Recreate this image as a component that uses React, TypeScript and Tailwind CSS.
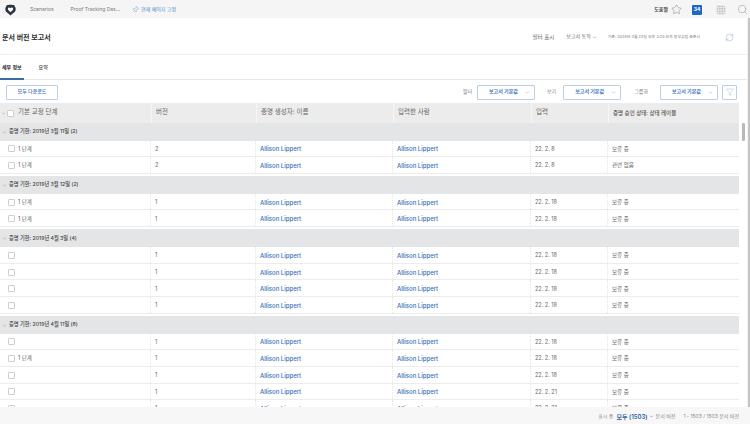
import React from "react";
import { Star, Search, Grid3x3, RefreshCw, Funnel, Pin, ChevronDown } from "lucide-react";

const font = "font-['Inter','Noto_Sans_CJK_KR',sans-serif]";
const cols = "grid grid-cols-[151px_105px_137px_138px_77px_131px]";

type Row = { step?: string; v: string; date: string; status?: string };
const HOLD = "보류 중";
const groups: { title: string; rows: Row[] }[] = [
  { title: "증명 기한: 2019년 3월 11일 (2)", rows: [
    { step: "1 단계", v: "2", date: "22. 2. 8" },
    { step: "1 단계", v: "2", date: "22. 2. 8", status: "관련 없음" },
  ]},
  { title: "증명 기한: 2019년 3월 12일 (2)", rows: [
    { step: "1 단계", v: "1", date: "22. 2. 18" },
    { step: "1 단계", v: "1", date: "22. 2. 18" },
  ]},
  { title: "증명 기한: 2019년 4월 3일 (4)", rows: [
    { v: "1", date: "22. 2. 18" },
    { v: "1", date: "22. 2. 18" },
    { v: "1", date: "22. 2. 18" },
    { v: "1", date: "22. 2. 18" },
  ]},
  { title: "증명 기한: 2019년 4월 11일 (8)", rows: [
    { v: "1", date: "22. 2. 18" },
    { step: "1 단계", v: "1", date: "22. 2. 18" },
    { v: "1", date: "22. 2. 18" },
    { v: "1", date: "22. 2. 21" },
    { v: "1", date: "22. 2. 21" },
    { v: "1", date: "22. 2. 21" },
  ]},
];

function Select() {
  return (
    <div className="flex h-[15px] w-[58px] items-center justify-between rounded-[1px] border border-[#b9cfe8] bg-white pl-[11px] pr-[4px] text-[5px] font-semibold text-[#3f78ba]">
      <span>보고서 기본값</span>
      <ChevronDown size={5} className="text-[#8a9099]" />
    </div>
  );
}

function Check({ white }: { white?: boolean }) {
  return <span className={`block h-[7px] w-[7px] shrink-0 rounded-[1px] border border-[#cfcfcf] ${white ? "bg-white" : ""}`} />;
}

function DataRow({ r }: { r: Row }) {
  const cell = "flex items-center border-r border-dotted border-[#e6e6e6] h-full pt-[1px]";
  return (
    <div className={`${cols} h-[16.65px] border-b border-[#ececec] bg-white text-[5.5px] text-[#666]`}>
      <div className={`${cell} gap-[3px] pl-[8px]`}><Check /><span>{r.step}</span></div>
      <div className={`${cell} pl-[4px]`}>{r.v}</div>
      <div className={`${cell} pl-[4px] text-[6px] font-medium text-[#3570b8]`}>Allison Lippert</div>
      <div className={`${cell} pl-[4px] text-[6px] font-medium text-[#3570b8]`}>Allison Lippert</div>
      <div className={`${cell} pl-[4px] text-[5.5px]`}>{r.date}</div>
      <div className="flex items-center pl-[4px] pt-[1px] text-[5.5px]">{r.status ?? HOLD}</div>
    </div>
  );
}

export default function App() {
  return (
    <div className={`${font} flex h-[424px] w-[750px] flex-col overflow-hidden bg-[#f3f3f3] text-[#333]`}>
      {/* Top nav */}
      <header className="flex h-[18px] shrink-0 items-center bg-[#f5f5f5] pl-[5px] pr-[2px] pt-[1px] text-[5px] text-[#777]">
        <svg width="11" height="12" viewBox="0 0 22 24" className="shrink-0">
          <path d="M11 23 3 16C1 14 0 11 1 7.500L3.500 2.500C7 1 15 1 18.500 2.500L21 7.500C22 11 21 14 19 16z" fill="#2b3440" />
          <path d="M11 16.500 6.500 12c-1.300-1.400-1-3.400.3-4.300C8.300 6.700 10 7.200 11 8.500c1-1.300 2.700-1.800 4.200-.8 1.300.9 1.600 2.900.3 4.300z" fill="#fff" />
        </svg>
        <span className="ml-[14px]">Scenarios</span>
        <span className="ml-[17px]">Proof Tracking Das...</span>
        <span className="ml-[12px] flex items-center gap-[2px] text-[#4a86c8]">
          <Pin size={7} strokeWidth={1.2} className="rotate-45" />
          <span>현재 페이지 고정</span>
        </span>
        <span className="ml-auto font-semibold text-[#444]">도움말</span>
        <Star size={11} strokeWidth={1} className="ml-[3px] text-[#777]" />
        <span className="ml-[10px] flex h-[10px] w-[10px] items-center justify-center rounded-[1px] bg-[#2067c0] text-[5px] font-bold text-white">34</span>
        <Grid3x3 size={10} strokeWidth={1} className="ml-[14px] text-[#999]" />
        <Search size={11} strokeWidth={1} className="ml-[11px] text-[#888]" />
      </header>

      <div className="flex min-h-0 flex-1">
        <div className="flex w-[747px] min-w-0 flex-col bg-white">
          {/* Title band */}
          <div className="flex h-[37px] shrink-0 items-center border-b border-[#eeeeee] pl-[2px] pr-[13px] pt-[2px]">
            <h1 className="mt-[2px] text-[7px] font-semibold text-[#2c2c2c]">문서 버전 보고서</h1>
            <span className="ml-auto text-[5.5px] text-[#666]">필터 표시</span>
            <span className="ml-[12px] flex items-center gap-[1px] text-[5px] text-[#666]">보고서 동작<ChevronDown size={5} /></span>
            <span className="ml-[11px] text-[3.9px] text-[#777]">기준: 2024년 3월 22일 오후 3:25 오후 동부유럽 표준시</span>
            <RefreshCw size={9} strokeWidth={1} className="ml-[25px] text-[#6e93bb]" />
          </div>

          {/* Tabs */}
          <div className="flex h-[25px] shrink-0 items-center gap-[17px] border-b border-[#e8e8e8] pl-[2px] pt-[1px] text-[5px]">
            <span className="relative flex h-full items-center font-bold text-[#222]">
              세부 정보
              <span className="absolute -bottom-px -left-[2px] h-[2px] w-[24px] bg-[#3a6ea5]" />
            </span>
            <span className="font-medium text-[#444]">요약</span>
          </div>

          {/* Toolbar */}
          <div className="flex h-[23px] shrink-0 items-center pl-[6px] pr-[10px] pt-[1px] text-[5px] text-[#777]">
            <button className="h-[15px] w-[52px] rounded-[1px] border border-[#b9cfe8] text-[5px] font-medium text-[#3f78ba]">모두 다운로드</button>
            <span className="ml-auto">필터</span>
            <span className="ml-[5px]"><Select /></span>
            <span className="ml-[12px]">보기</span>
            <span className="ml-[7px]"><Select /></span>
            <span className="ml-[13px]">그룹화</span>
            <span className="ml-[12px]"><Select /></span>
            <button className="ml-[4px] flex h-[15px] w-[15px] items-center justify-center rounded-[1px] border border-[#b9cfe8] text-[#8aa0b8]">
              <Funnel size={8} strokeWidth={1} />
            </button>
          </div>

          {/* Table */}
          <div className="flex min-h-0 flex-1">
            <div className="flex w-[739px] min-w-0 flex-col overflow-hidden">
              <div className={`${cols} h-[19.5px] shrink-0 items-center bg-[#ececec] text-[6.5px] text-[#666]`}>
                <div className="flex h-full items-center pl-[1px] pt-[1px]">
                  <ChevronDown size={5} className="text-[#888]" />
                  <span className="ml-[1px] mr-[4px]"><Check white /></span>
                  <span>기본 교정 단계</span>
                </div>
                <div className="flex h-full items-center border-l border-[#f6f6f6] pl-[4px] pt-[1px]">버전</div>
                <div className="flex h-full items-center border-l border-[#f6f6f6] pl-[4px] pt-[1px]">증명 생성자: 이름</div>
                <div className="flex h-full items-center border-l border-[#f6f6f6] pl-[4px] pt-[1px]">입력한 사람</div>
                <div className="flex h-full items-center border-l border-[#f6f6f6] pl-[4px] pt-[1px]">입력</div>
                <div className="flex h-full items-center border-l border-[#f6f6f6] pl-[4px] pt-[1px] text-[5.5px] font-medium text-[#555]">증명 승인 상태: 상태 레이블</div>
              </div>
              <div className="min-h-0 flex-1 overflow-hidden">
                {groups.map((g, i) => (
                  <section key={g.title} className={i ? "mt-[2px]" : ""}>
                    <div className="flex h-[18px] items-center gap-[2px] bg-[#e4e5e6] pl-[2px] pt-[1px] text-[5.2px] font-medium text-[#444]">
                      <ChevronDown size={5} className="text-[#888]" />
                      <span>{g.title}</span>
                    </div>
                    {g.rows.map((r, j) => <DataRow key={j} r={r} />)}
                  </section>
                ))}
              </div>
            </div>
            {/* Inner scrollbar */}
            <div className="flex w-[8px] shrink-0 justify-center bg-white">
              <div className="mt-[20px] h-[18px] w-[3px] rounded-[1px] bg-[#b9b9b9]" />
            </div>
          </div>
        </div>
        {/* Page scrollbar */}
        <div className="flex w-[3px] shrink-0 justify-end bg-[#f3f3f3]">
          <div className="h-full w-[2px] bg-[#c4c4c4]" />
        </div>
      </div>

      {/* Footer */}
      <footer className="flex h-[17px] shrink-0 items-center justify-end bg-[#f7f7f7] pr-[11px] pt-[2px] text-[5px] text-[#888]">
        <span>표시 중</span>
        <span className="ml-[3px] flex items-center gap-[1px] text-[6px] font-semibold text-[#2f5f9a]">모두 (1503)<ChevronDown size={5} /></span>
        <span className="ml-[2px]">문서 버전</span>
        <span className="ml-[8px]">1 - 1503 / 1503 문서 버전</span>
      </footer>
    </div>
  );
}
